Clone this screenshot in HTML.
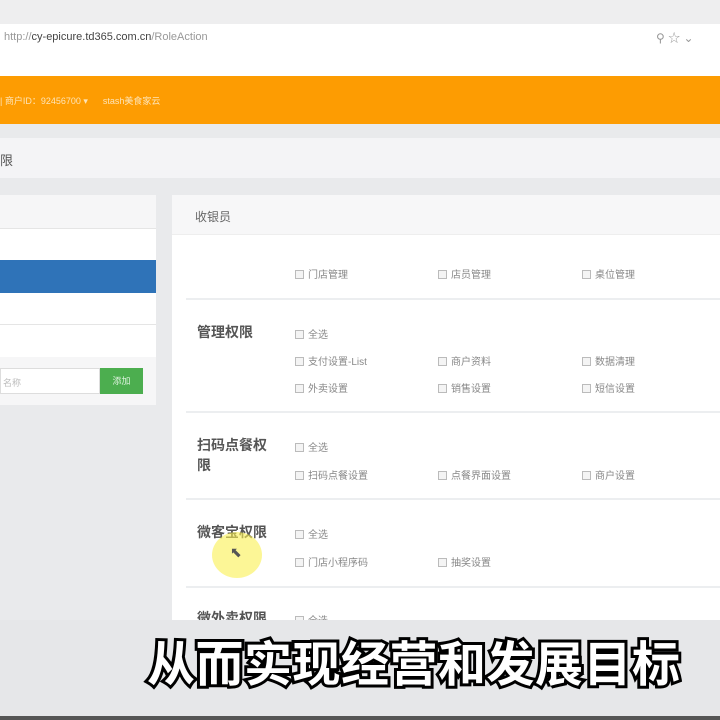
<!DOCTYPE html><html><head><meta charset="utf-8"><style>
*{margin:0;padding:0;box-sizing:border-box}
body{width:720px;height:720px;overflow:hidden;background:#e9eaec;font-family:"Liberation Sans","Noto Sans CJK SC",sans-serif;position:relative;color:#666}
.a{position:absolute}
.cb{position:absolute;font-size:10px;color:#888;white-space:nowrap}
.cb:before{content:"";display:inline-block;width:7px;height:7px;border:1px solid #bbb;background:#f4f4f4;margin-right:4px;vertical-align:-1px}
.lbl{position:absolute;font-size:14px;font-weight:bold;color:#555;line-height:20px}
.hr{position:absolute;left:186px;right:0;height:2px;background:#eceef0}
</style></head><body>
<div class="a" style="left:0;top:0;width:720px;height:24px;background:#eeeeef"></div>
<div class="a" style="left:0;top:24px;width:720px;height:52px;background:#fff"></div>
<div class="a" style="left:4px;top:31px;font-size:11px;color:#999">http://<span style="color:#444">cy-epicure.td365.com.cn</span>/RoleAction</div>
<div class="a" style="left:656px;top:29px;font-size:12px;color:#999">⚲ ☆ ⌄</div>
<div class="a" style="left:0;top:76px;width:720px;height:48px;background:#fd9c02"></div>
<div class="a" style="left:0;top:94px;font-size:9px;color:#fde4b8">| 商户ID：92456700 ▾ &nbsp;&nbsp;&nbsp;&nbsp; stash美食家云</div>
<div class="a" style="left:0;top:138px;width:720px;height:40px;background:#f4f4f6"></div>
<div class="a" style="left:0;top:150px;font-size:13px;color:#555">限</div>
<div class="a" style="left:0;top:195px;width:156px;height:210px;background:#f6f6f7"></div>
<div class="a" style="left:0;top:228px;width:156px;height:32px;background:#fff;border-top:1px solid #e5e5e5"></div>
<div class="a" style="left:0;top:260px;width:156px;height:33px;background:#2f73b8"></div>
<div class="a" style="left:0;top:293px;width:156px;height:32px;background:#fff;border-bottom:1px solid #e5e5e5"></div>
<div class="a" style="left:0;top:325px;width:156px;height:32px;background:#fff"></div>
<div class="a" style="left:0;top:368px;width:100px;height:26px;background:#fff;border:1px solid #ddd;font-size:9px;color:#bbb;padding:7px 0 0 2px">名称</div>
<div class="a" style="left:100px;top:368px;width:43px;height:26px;background:#4cae4f;font-size:9px;color:#dff3df;text-align:center;line-height:26px">添加</div>
<div class="a" style="left:172px;top:195px;width:548px;height:425px;background:#fff"></div>
<div class="a" style="left:172px;top:195px;width:548px;height:40px;background:#f7f7f8;border-bottom:1px solid #eee"></div>
<div class="a" style="left:195px;top:208px;font-size:12px;color:#666">收银员</div>
<div class="cb" style="left:295px;top:266px">门店管理</div><div class="cb" style="left:438px;top:266px">店员管理</div><div class="cb" style="left:582px;top:266px">桌位管理</div>
<div class="hr" style="top:298px"></div>
<div class="lbl" style="left:197px;top:322px">管理权限</div>
<div class="cb" style="left:295px;top:326px">全选</div>
<div class="cb" style="left:295px;top:353px">支付设置-List</div><div class="cb" style="left:438px;top:353px">商户资料</div><div class="cb" style="left:582px;top:353px">数据清理</div>
<div class="cb" style="left:295px;top:380px">外卖设置</div><div class="cb" style="left:438px;top:380px">销售设置</div><div class="cb" style="left:582px;top:380px">短信设置</div>
<div class="hr" style="top:411px"></div>
<div class="lbl" style="left:197px;top:435px;width:80px">扫码点餐权<br>限</div>
<div class="cb" style="left:295px;top:439px">全选</div>
<div class="cb" style="left:295px;top:467px">扫码点餐设置</div><div class="cb" style="left:438px;top:467px">点餐界面设置</div><div class="cb" style="left:582px;top:467px">商户设置</div>
<div class="hr" style="top:498px"></div>
<div class="lbl" style="left:197px;top:522px">微客宝权限</div>
<div class="cb" style="left:295px;top:526px">全选</div>
<div class="cb" style="left:295px;top:554px">门店小程序码</div><div class="cb" style="left:438px;top:554px">抽奖设置</div>
<div class="a" style="left:212px;top:532px;width:50px;height:46px;border-radius:50%;background:rgba(250,240,80,.6)"></div>
<div class="a" style="left:230px;top:544px;font-size:14px;color:#555">⬉</div>
<div class="hr" style="top:586px"></div>
<div class="lbl" style="left:197px;top:608px">微外卖权限</div>
<div class="cb" style="left:295px;top:612px">全选</div>
<div class="a" style="left:0;top:620px;width:720px;height:96px;background:#e6e7e9"></div>
<div class="a" style="left:0;top:716px;width:720px;height:4px;background:#555"></div>
<div class="a" style="left:147px;top:632px;font-size:48px;font-weight:bold;color:#fff;letter-spacing:0.5px;-webkit-text-stroke:6px #000;paint-order:stroke fill;line-height:56px;font-family:'Noto Sans CJK SC',sans-serif;white-space:nowrap">从而实现经营和发展目标</div>
</body></html>
